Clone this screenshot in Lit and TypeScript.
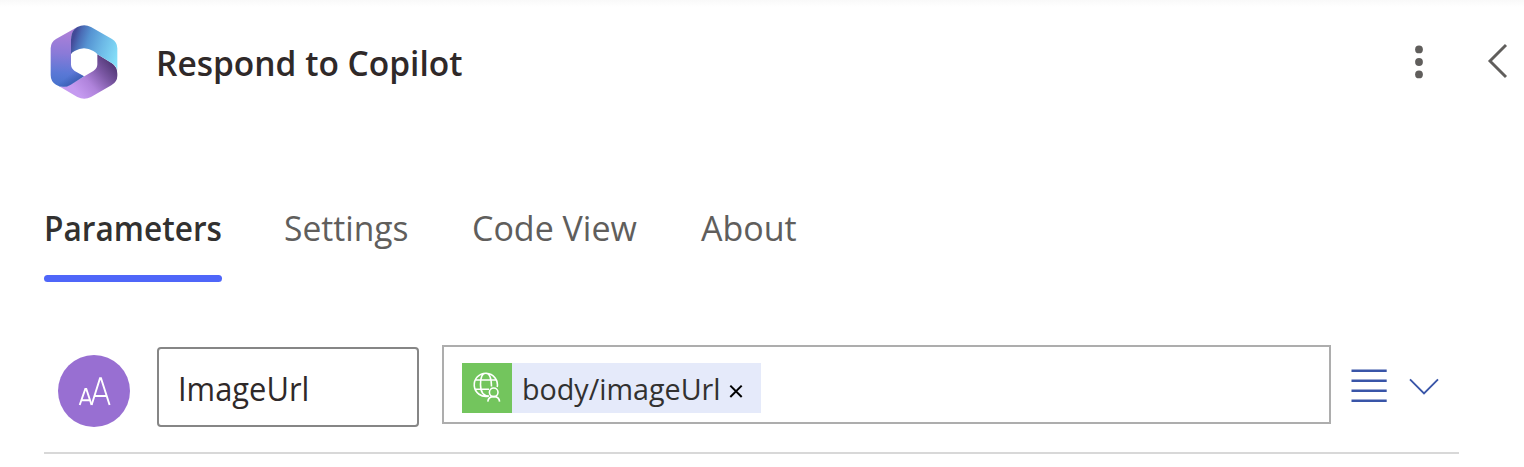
import { LitElement, html, css, svg } from "lit";
import { customElement, state } from "lit/decorators.js";

const logo = svg`
  <defs>
    <linearGradient id="left" x1="80" y1="50" x2="70" y2="215" gradientUnits="userSpaceOnUse">
      <stop offset="0" stop-color="#ad80d8"/><stop offset=".4" stop-color="#8a7ad8"/><stop offset=".75" stop-color="#5b78d6"/><stop offset="1" stop-color="#4672cc"/>
    </linearGradient>
    <linearGradient id="top" x1="92" y1="95" x2="232" y2="140" gradientUnits="userSpaceOnUse">
      <stop offset="0" stop-color="#434a98"/><stop offset=".12" stop-color="#4a6cb6"/><stop offset=".3" stop-color="#5593d2"/><stop offset=".6" stop-color="#6cb8e6"/><stop offset="1" stop-color="#86e2fa"/>
    </linearGradient>
    <linearGradient id="bottom" x1="215" y1="150" x2="115" y2="235" gradientUnits="userSpaceOnUse">
      <stop offset="0" stop-color="#573c7c"/><stop offset=".3" stop-color="#7d59a6"/><stop offset=".65" stop-color="#af83db"/><stop offset="1" stop-color="#c59af0"/>
    </linearGradient>
    <linearGradient id="fold" x1="85" y1="160" x2="120" y2="205" gradientUnits="userSpaceOnUse">
      <stop offset=".3" stop-color="#2c4a9c" stop-opacity="0"/><stop offset="1" stop-color="#2c4a9c" stop-opacity=".7"/>
    </linearGradient>
  </defs>
  <path fill="url(#bottom)" d="M172 118L216 145Q232 156 232 176V182Q232 200 214 211L153 246Q133 257 112 246L56 213Q75 218 92 208L160 168Q172 160 172 148Z"/>
  <path fill="url(#left)" d="M112 36L48 72Q32 82 32 100V180Q32 200 48 209Q70 222 92 209L132 184L104 168Q93 160 93 148V75Q93 48 112 36Z"/>
  <path fill="url(#fold)" d="M93 148Q93 160 104 168L132 184L92 209Q70 222 48 209Z"/>
  <path fill="url(#top)" d="M93 118V75Q93 46 112 36Q133 25 153 36L216 72Q232 82 232 100V168Q231 154 216 145L172 118Q170 113 160 108Q132 92 104 108Q95 112 93 118Z"/>`;

@customElement("app-root")
export class AppRoot extends LitElement {
  @state() private active = "Parameters";
  private tabs = ["Parameters", "Settings", "Code View", "About"];

  static styles = css`
    :host {
      display: block; box-sizing: border-box; height: 467px; overflow: hidden;
      background: linear-gradient(#f9f9f9, #fff 7px) #fff;
      font-family: "Segoe UI", "Open Sans", "Noto Sans", sans-serif; color: #323130;
    }
    svg { display: block; flex: none; overflow: visible; }
    button { all: unset; cursor: pointer; }
    .label { display: block; transform-origin: 0 50%; }
    header { display: flex; align-items: flex-start; height: 110px; padding: 15px 16px 0 40px; box-sizing: border-box; }
    h1 { margin: 24px 0 0 26px; flex: 1; font-size: 34.5px; line-height: 48px; font-weight: 600; color: #2f2929; white-space: nowrap; }
    h1 .label { transform: scaleX(.971); }
    .more { margin: 30px 62px 0 0; }
    .collapse { margin-top: 28px; }
    nav { display: flex; gap: 62px; padding: 94px 44px 0; height: 79px; }
    .tab { font-size: 34px; line-height: 48px; height: 78px; color: #605e5c; white-space: nowrap; display: flex; flex-direction: column; justify-content: space-between; }
    .tab.active { font-weight: 600; color: #323130; }
    .tab.active::after { content: ""; height: 7px; border-radius: 4px; background: #4f66f9; }
    .parameters { width: 178px; }
    .parameters .label { transform: scaleX(.93); }
    .settings { width: 126px; }
    .settings .label { transform: scaleX(.988); }
    .code { width: 167px; }
    .row { display: flex; align-items: flex-start; margin: 62px 65px 0 44px; height: 107px; border-bottom: 2px solid #d8d8d8; padding-left: 14px; }
    .avatar { margin-top: 10px; }
    .name { box-sizing: border-box; width: 262px; height: 80px; margin: 2px 0 0 27px; border: 2px solid #868686; border-radius: 4px; padding-left: 19px; font-size: 33px; line-height: 80px; color: #2f2929; }
    .name .label { transform: scaleX(.935); }
    .value { box-sizing: border-box; width: 889px; height: 79px; margin-left: 23px; border: 2px solid #adadad; padding: 16px 18px; }
    .token { display: flex; width: 299px; height: 50px; background: #e5eafa; font-size: 29px; line-height: 52px; white-space: nowrap; }
    .token .label { margin-left: 10px; width: 206px; transform: scaleX(.989); }
    .token .x { margin-top: 20px; }
    .list { margin: 23px 0 0 20px; }
    .expand { margin: 32px 0 0 22px; }
  `;

  render() {
    return html`
      <header>
        <svg width="90" height="95" viewBox="0 0 270 285">${logo}</svg>
        <h1><span class="label">Respond to Copilot</span></h1>
        <button class="more" aria-label="More">
          <svg width="10" height="34" fill="#605e5c"><circle cx="5" cy="4.4" r="3.9"/><circle cx="5" cy="17" r="3.9"/><circle cx="5" cy="29.4" r="3.9"/></svg>
        </button>
        <button class="collapse" aria-label="Collapse">
          <svg width="22" height="36" fill="none" stroke="#605e5c" stroke-width="2.9"><path d="M20 2L4 18L20 34"/></svg>
        </button>
      </header>
      <nav>
        ${this.tabs.map((t) => html`<button class="tab ${t === this.active ? "active" : ""} ${t.split(" ")[0].toLowerCase()}" @click=${() => (this.active = t)}><span class="label">${t}</span></button>`)}
      </nav>
      <div class="row">
        <svg class="avatar" width="72" height="72" viewBox="0 0 72 72">
          <circle cx="36" cy="36" r="36" fill="#986fd2"/>
          <g fill="none" stroke="#fff" stroke-width="1.9"><path d="M21.7 50L27.3 34H28.3L33.6 50M23.5 45.3H32.2"/><path d="M33.6 50L42 23.2H43L51.6 50M36.6 41H48.6"/></g>
        </svg>
        <div class="name"><span class="label">ImageUrl</span></div>
        <div class="value">
          <div class="token">
            <svg width="50" height="50" viewBox="0 0 50 50">
              <path fill="#73c55d" d="M0 0H50V50H0Z"/>
              <g fill="none" stroke="#fff" stroke-width="1.6">
                <path d="M26.5 33.1A11.6 11.6 0 1 1 35.2 24M27 33Q18.5 33 18.5 21.5T24 10.2Q29.3 10.2 29.5 23.5M13.7 17H34.3M13.7 26.3H27"/>
                <circle cx="31.7" cy="29.3" r="4.3"/><path d="M25.8 38.6Q26.2 33.6 31.7 33.6T37.6 38.6"/>
              </g>
            </svg>
            <span class="label">body/imageUrl</span>
            <svg class="x" width="16" height="16" fill="none" stroke="#000" stroke-width="2"><path d="M2.3 2.6L13.7 14M13.7 2.6L2.3 14"/></svg>
          </div>
        </div>
        <svg class="list" width="36" height="36" fill="#3955a8"><path d="M.5 1.4H35.7V4H.5ZM.5 11.4H35.7V14H.5ZM.5 21.4H35.7V24H.5ZM.5 31.4H35.7V34H.5Z"/></svg>
        <button class="expand" aria-label="Expand"><svg width="30" height="18" fill="none" stroke="#3955a8" stroke-width="1.9"><path d="M1 2.4L15 16.4L29 2.4"/></svg></button>
      </div>
    `;
  }
}
